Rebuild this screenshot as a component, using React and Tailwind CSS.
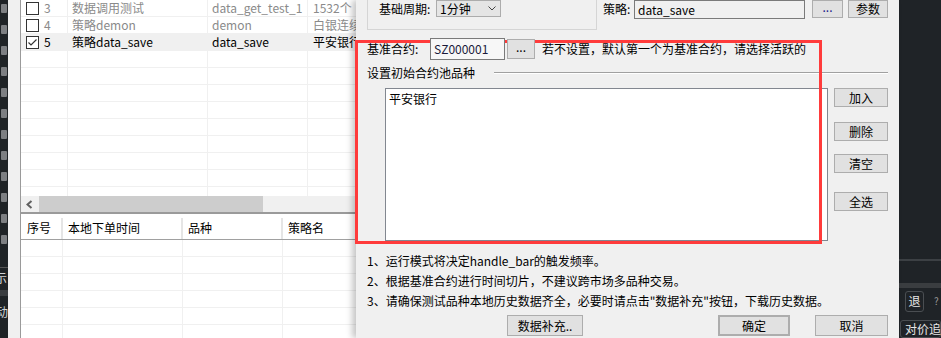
import React from 'react';

const topRows = [
    { n: '3', name: '数据调用测试', code: 'data_get_test_1', extra: '1532个', dim: true },
    { n: '4', name: '策略demon', code: 'demon', extra: '白银连续', dim: true },
    { n: '5', name: '策略data_save', code: 'data_save', extra: '平安银行', checked: true, active: true },
];

const Checkbox = ({ checked }) => (
    <div className="w-[13px] h-[13px] border border-[#333] bg-white flex items-center justify-center">
        {checked && (
            <svg width="11" height="11" viewBox="0 0 11 11">
                <polyline points="1.5,5.5 4,8 9.5,2.5" fill="none" stroke="#333" strokeWidth="1.2" />
            </svg>
        )}
    </div>
);

const WinButton = ({ children, className = '' }) => (
    <div className={`flex items-center justify-center bg-[#e1e1e1] border border-[#adadad] ${className}`}>
        {children}
    </div>
);

const TopTable = () => {
    const empty = Array.from({ length: 9 });
    return (
        <div className="h-[213px] border-l border-b border-[#9a9a9a] bg-white flex flex-col">
            <div className="h-[196px] overflow-hidden">
                {topRows.map((r) => (
                    <div
                        key={r.n}
                        className={`flex h-[17px] border-b border-[#f0f0f0] leading-[16px] ${r.active ? 'bg-[#f0f0f0] text-black' : 'text-[#8a8a8a]'}`}
                    >
                        <div className="w-[47px] shrink-0 border-r border-[#f0f0f0] flex items-center pl-[5px]">
                            <Checkbox checked={r.checked} />
                            <span className="ml-[5px]">{r.n}</span>
                        </div>
                        <div className="w-[140px] shrink-0 border-r border-[#f0f0f0] pl-[4px] whitespace-nowrap">{r.name}</div>
                        <div className="w-[100px] shrink-0 border-r border-[#f0f0f0] pl-[4px] whitespace-nowrap">{r.code}</div>
                        <div className="flex-1 pl-[5px] whitespace-nowrap overflow-hidden">{r.extra}</div>
                    </div>
                ))}
                {empty.map((_, i) => (
                    <div key={i} className="flex h-[17px] border-b border-[#f0f0f0]">
                        <div className="w-[47px] shrink-0 border-r border-[#f0f0f0]" />
                        <div className="w-[140px] shrink-0 border-r border-[#f0f0f0]" />
                        <div className="w-[100px] shrink-0 border-r border-[#f0f0f0]" />
                        <div className="flex-1" />
                    </div>
                ))}
            </div>
            {/* horizontal scrollbar */}
            <div className="h-[16px] flex bg-[#f0f0f0]">
                <div className="w-[17px] flex items-center justify-center">
                    <svg width="7" height="9" viewBox="0 0 7 9">
                        <polyline points="5.5,1 1.5,4.5 5.5,8" fill="none" stroke="#606060" strokeWidth="2" />
                    </svg>
                </div>
                <div className="ml-[1px] w-[224px] bg-[#cdcdcd]" />
            </div>
        </div>
    );
};

const BottomTable = () => {
    const rows = Array.from({ length: 6 });
    return (
        <div className="flex-1 border-l border-t border-[#9a9a9a] bg-white pt-[4px]">
            <div className="flex h-[22px] border-b border-[#a0a0a0] leading-[20px] text-black">
                <div className="w-[42px] shrink-0 border-r-2 border-[#e5e5e5] pl-[6px]">序号</div>
                <div className="w-[120px] shrink-0 border-r-2 border-[#e5e5e5] pl-[5px]">本地下单时间</div>
                <div className="w-[100px] shrink-0 border-r-2 border-[#e5e5e5] pl-[5px]">品种</div>
                <div className="flex-1 pl-[5px] whitespace-nowrap">策略名</div>
            </div>
            {rows.map((_, i) => (
                <div key={i} className="flex h-[17px] border-b border-[#f0f0f0]">
                    <div className="w-[42px] shrink-0 border-r border-[#f0f0f0]" />
                    <div className="w-[120px] shrink-0 border-r border-[#f0f0f0]" />
                    <div className="w-[100px] shrink-0 border-r border-[#f0f0f0]" />
                    <div className="flex-1" />
                </div>
            ))}
        </div>
    );
};

const Dialog = () => (
    <div className="relative z-10 w-[543px] shrink-0 h-full bg-[#f0f0f0] shadow-[-4px_0_6px_rgba(0,0,0,0.22)] text-black">
        {/* red annotation frame */}
        <div className="absolute left-[-1px] top-[40px] w-[467px] h-[204px] border-[3px] border-[#ff3b3b] z-10 pointer-events-none" />

        {/* top row */}
        <div className="flex items-start h-[38px]">
            <div className="ml-[11px] w-[230px] h-[30px] border-l border-r border-b border-[#d5d5d5] flex items-start">
                <span className="ml-[11px] w-[57px] leading-[17px]">基础周期:</span>
                <div className="w-[65px] h-[17px] bg-[#e5e5e5] border border-[#acacac] flex items-center pl-[3px] leading-[15px]">
                    <span className="flex-1">1分钟</span>
                    <svg className="mr-[4px]" width="8" height="5" viewBox="0 0 8 5">
                        <polyline points="0.5,0.5 4,4 7.5,0.5" fill="none" stroke="#444" strokeWidth="1" />
                    </svg>
                </div>
            </div>
            <span className="ml-[6px] w-[31px] leading-[17px]">策略:</span>
            <div className="w-[171px] h-[19px] bg-[#f0f0f0] border border-[#7a7a7a] pl-[3px] leading-[17px]">data_save</div>
            <WinButton className="ml-[7px] w-[31px] h-[18px] leading-none">
                <span className="text-[#1a1a8a] -mt-[4px]">...</span>
            </WinButton>
            <WinButton className="ml-[5px] w-[40px] h-[18px]">参数</WinButton>
        </div>

        {/* base contract row */}
        <div className="flex items-start h-[22px]">
            <span className="ml-[11px] w-[63px] leading-[22px]">基准合约:</span>
            <div className="relative z-20 w-[75px] h-[22px] bg-[#f7f7f7] border border-[#7a7a7a] pl-[3px] leading-[20px] text-[#1a1a3a]">SZ000001</div>
            <WinButton className="relative z-20 ml-[2px] mt-[1px] w-[28px] h-[20px]">
                <span className="-mt-[4px]">...</span>
            </WinButton>
            <span className="ml-[7px] leading-[22px] whitespace-nowrap">若不设置，默认第一个为基准合约，请选择活跃的</span>
        </div>

        {/* pool label */}
        <div className="flex items-center mt-[5px] h-[16px]">
            <span className="ml-[11px] w-[127px] leading-[16px]">设置初始合约池品种</span>
            <div className="flex-1 mr-[11px] h-[2px] border-t border-[#a0a0a0] border-b border-b-white" />
        </div>

        {/* pool list + buttons */}
        <div className="flex items-start mt-[7px]">
            <div className="ml-[29px] w-[443px] h-[153px] bg-white border border-[#828790] pl-[3px] pt-[2px] leading-[16px]">
                平安银行
            </div>
            <div className="ml-[6px] w-[54px] flex flex-col">
                <WinButton className="h-[19px]">加入</WinButton>
                <WinButton className="mt-[15px] h-[19px]">删除</WinButton>
                <WinButton className="mt-[13px] h-[19px]">清空</WinButton>
                <WinButton className="mt-[19px] h-[19px]">全选</WinButton>
            </div>
        </div>

        {/* notes */}
        <div className="mt-[10px] ml-[11px] whitespace-nowrap">
            <div className="h-[20px] leading-[20px]">1、运行模式将决定handle_bar的触发频率。</div>
            <div className="h-[20px] leading-[20px]">2、根据基准合约进行时间切片，不建议跨市场多品种交易。</div>
            <div className="h-[19px] leading-[19px]">3、请确保测试品种本地历史数据齐全，必要时请点击"数据补充"按钮，下载历史数据。</div>
        </div>

        {/* bottom buttons */}
        <div className="flex mt-[5px]">
            <WinButton className="ml-[151px] w-[76px] h-[21px]">数据补充..</WinButton>
            <WinButton className="ml-[135px] w-[72px] h-[21px] border-2 border-[#0078d7]">确定</WinButton>
            <WinButton className="ml-[25px] w-[73px] h-[21px]">取消</WinButton>
        </div>
    </div>
);

const LeftStrip = () => (
    <div className="w-[8px] shrink-0 h-full bg-[#1f2326] flex flex-col overflow-hidden">
        <div className="flex flex-col pt-[4px]">
            {Array.from({ length: 12 }).map((_, i) => (
                <div key={i} className="h-[21px] flex items-start">
                    <div className="ml-[1px] w-[6px] h-[9px] bg-[#7d7f82] rounded-[1px]" />
                </div>
            ))}
        </div>
        <div className="mt-[11px] h-[20px] border-t border-[#555] text-[#cfd3d6] leading-[20px] whitespace-nowrap -ml-[5px]">示</div>
        <div className="mt-[3px] h-[6px] bg-[#3a3d40]" />
        <div className="mt-[8px] text-[#cfd3d6] leading-[16px] whitespace-nowrap -ml-[4px]">动</div>
    </div>
);

const RightStrip = () => (
    <div className="w-[42px] shrink-0 h-full bg-[#1f2327] flex flex-col overflow-hidden">
        <div className="h-[267px]" />
        <div className="h-[2px] bg-[#3c4044]" />
        <div className="h-[23px]" />
        <div className="h-[5px] bg-[#3a3d40]" />
        <div className="mt-[3px] flex items-center">
            <div className="ml-[6px] w-[19px] h-[21px] border border-[#4a4e52] rounded-[3px] text-[#e6e6e6] flex items-center justify-center">退</div>
            <div className="ml-[10px] w-[6px] h-[10px] text-[#9a9a9a] leading-[10px] text-[10px] overflow-hidden">?</div>
        </div>
        <div className="mt-[8px] ml-[1px] border border-[#4a4e52] rounded-[3px] pl-[4px] text-[#e6e6e6] whitespace-nowrap leading-[16px]">对价追</div>
    </div>
);

export default function App() {
    return (
        <div className="w-[941px] h-[338px] flex overflow-hidden bg-[#f0f0f0] font-['Noto_Sans_CJK_SC',sans-serif] text-[12px]">
            <LeftStrip />
            <div className="w-[12px] shrink-0 bg-[#f0f0f0]" />
            <div className="w-[336px] shrink-0 h-full flex flex-col overflow-hidden">
                <TopTable />
                <div className="h-[3px]" />
                <div className="h-[1px] bg-[#9a9a9a]" />
                <div className="h-[1px]" />
                <BottomTable />
            </div>
            <Dialog />
            <RightStrip />
        </div>
    );
}
